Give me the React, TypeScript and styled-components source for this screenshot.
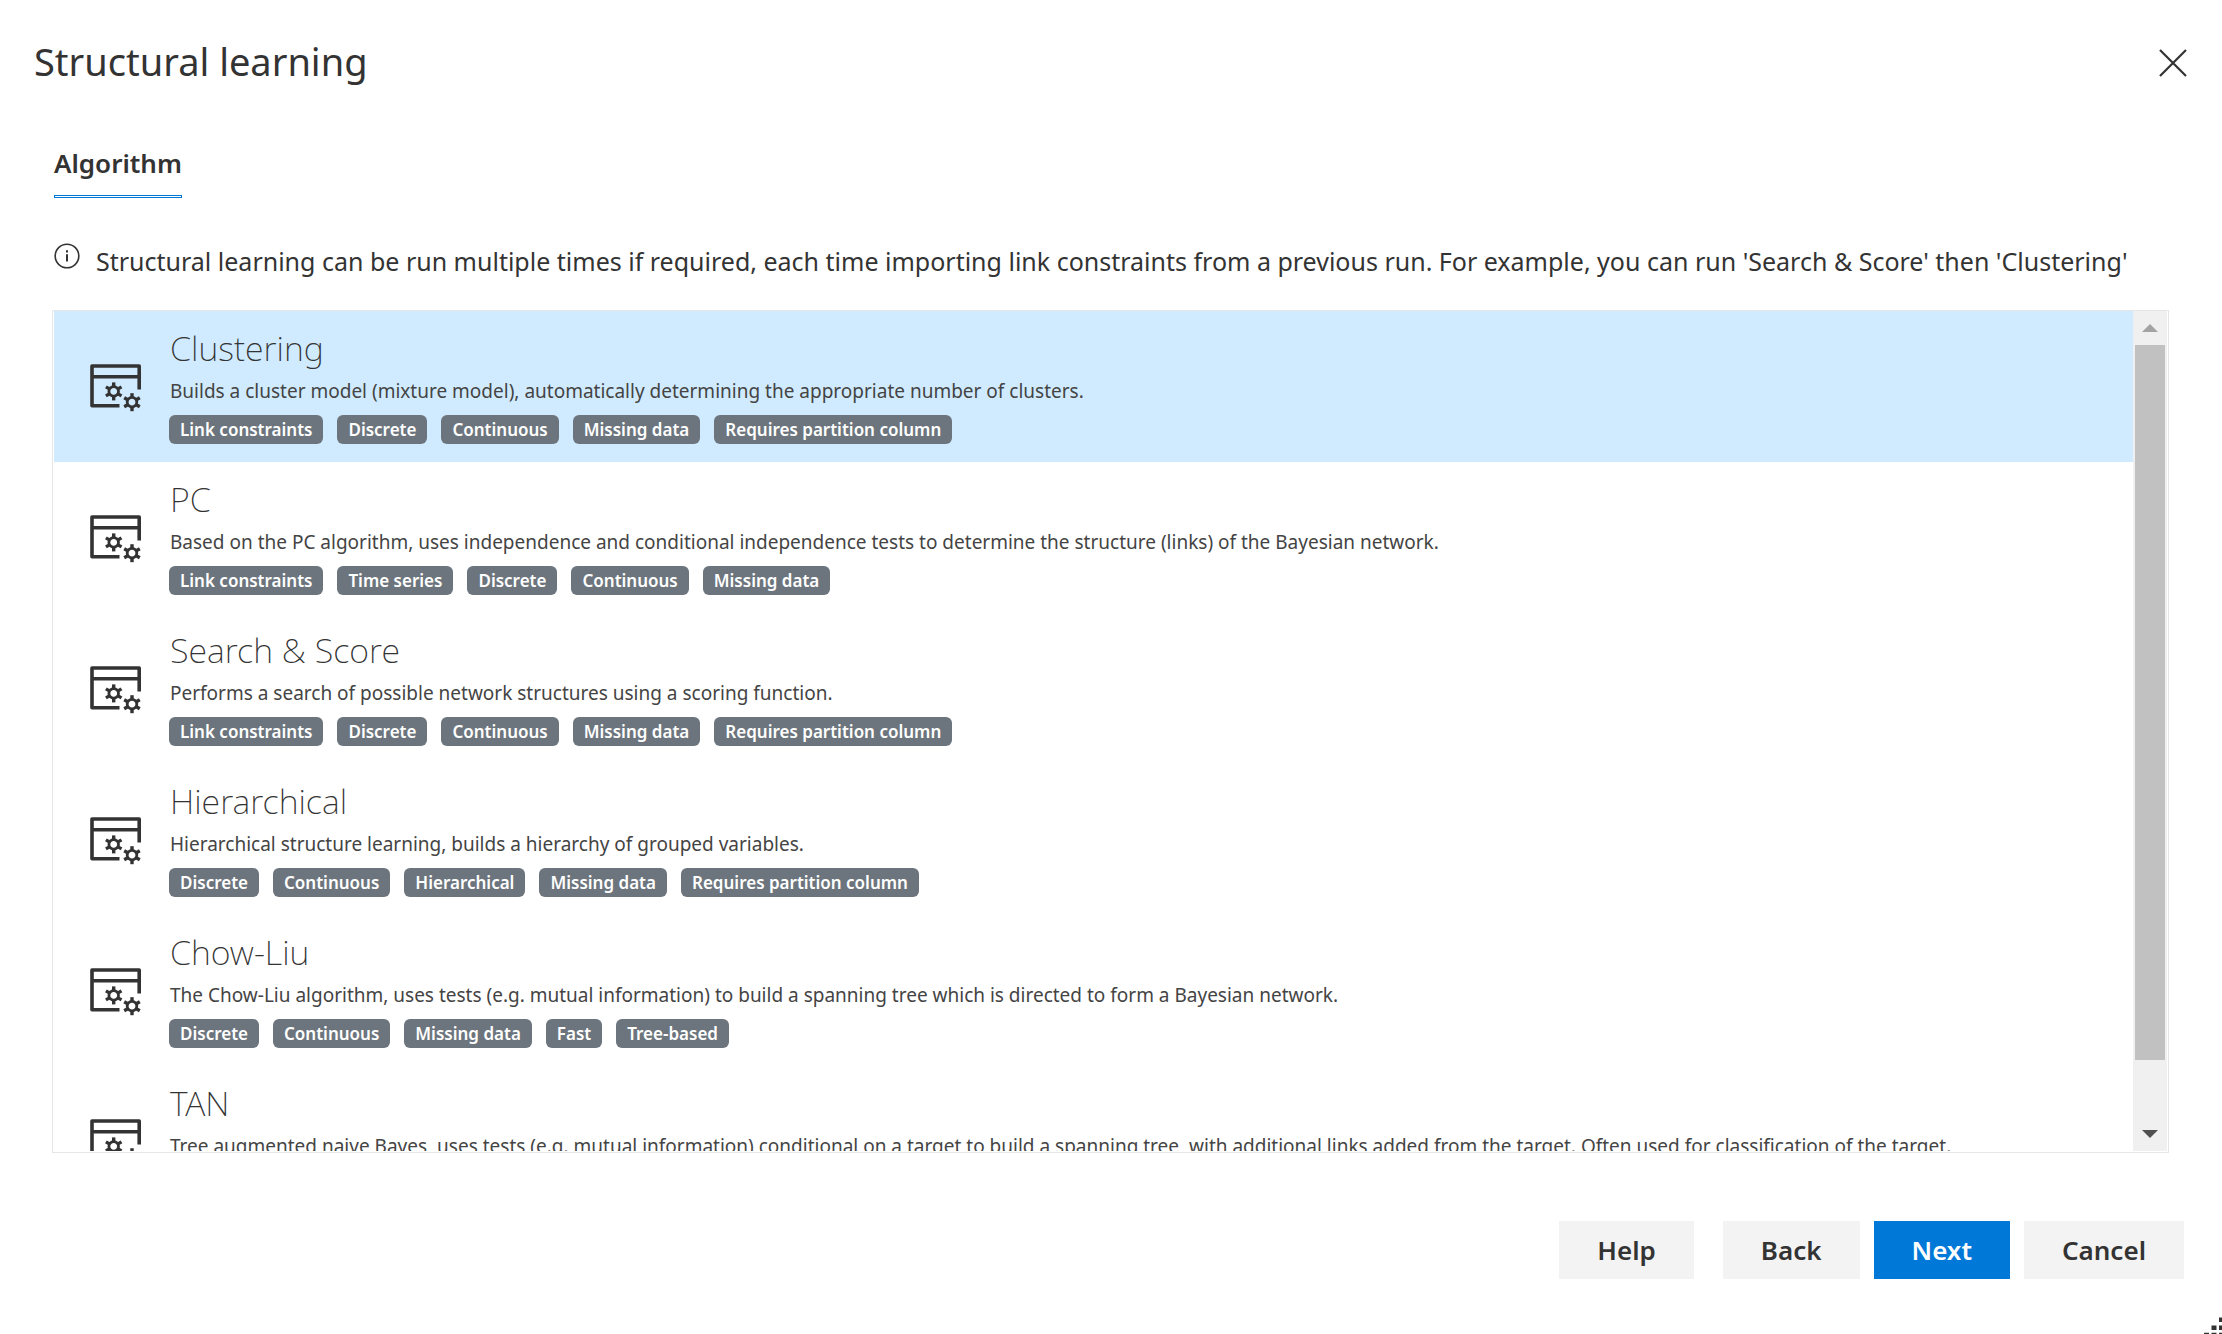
import React, { useState } from 'react';
import styled, { createGlobalStyle } from 'styled-components';

const GlobalStyle = createGlobalStyle`
  *, *::before, *::after { box-sizing: border-box; }
  body {
    margin: 0;
    background: #fff;
    color: #333;
    font-family: "Noto Sans", "Open Sans", sans-serif;
  }
`;

const Dialog = styled.main`
  position: relative;
  display: flex;
  flex-direction: column;
  height: 100vh;
  overflow: hidden;
`;

const Header = styled.header`
  display: flex;
  justify-content: space-between;
  align-items: center;
  padding: 35px 35px 0 34px;
`;

const Title = styled.h1`
  margin: 0;
  font-size: 38px;
  font-weight: 400;
  line-height: 52px;
`;

const CloseButton = styled.button`
  display: flex;
  padding: 4px 0 0;
  border: 0;
  background: none;
  color: inherit;
  cursor: pointer;
`;

const Content = styled.section`
  flex: 1;
  min-height: 0;
  display: flex;
  flex-direction: column;
  padding: 58px 53px 0 52px;
`;

const Tabs = styled.nav`
  display: flex;
  padding-left: 2px;
`;

const Tab = styled.button`
  display: flex;
  flex-direction: column;
  gap: 14px;
  padding: 0;
  border: 0;
  background: none;
  color: inherit;
  font: 600 26px/36px "Noto Sans", "Open Sans", sans-serif;

  &::after {
    content: "";
    height: 3px;
    border: 1px solid #0078d7;
  }
`;

const Info = styled.p`
  display: flex;
  gap: 16px;
  margin: 45px 0 31px;
  padding-left: 2px;
  font-size: 25px;
  line-height: 36px;
  white-space: nowrap;

  svg { flex: none; }
`;

const ListFrame = styled.div`
  flex: 1;
  min-height: 0;
  display: flex;
  padding: 0 1px 1px;
  border: 1px solid #e6e6e6;
`;

const List = styled.ul`
  flex: 1;
  min-width: 0;
  margin: 0;
  padding: 0;
  overflow: hidden;
  list-style: none;
`;

const Item = styled.li<{ $selected: boolean }>`
  display: flex;
  gap: 27px;
  height: 151px;
  padding: 14px 36px 0;
  background: ${(p) => (p.$selected ? '#d0ebff' : 'transparent')};
  cursor: pointer;

  > svg { flex: none; margin-top: 39px; }
`;

const Name = styled.h2`
  margin: 0;
  padding-left: 1px;
  font-size: 34px;
  font-weight: 200;
  line-height: 46px;
`;

const Description = styled.p`
  margin: 0;
  padding-left: 1px;
  color: #444;
  font-size: 19px;
  line-height: 40px;
  white-space: nowrap;
`;

const Tags = styled.div`
  display: flex;
  gap: 14px;
  margin-top: 4px;
`;

const Tag = styled.span`
  padding: 0 11px;
  border-radius: 6px;
  background: #6c757d;
  color: #fff;
  font-size: 17px;
  font-weight: 600;
  line-height: 29px;
`;

const Scrollbar = styled.div`
  display: flex;
  flex-direction: column;
  width: 34px;
  background: #f0f0f0;
`;

const ScrollArrow = styled.button<{ $color: string }>`
  display: flex;
  align-items: center;
  justify-content: center;
  height: 34px;
  padding: 0;
  border: 0;
  background: none;
  color: ${(p) => p.$color};
`;

const Track = styled.div`
  flex: 1;
  padding: 0 2px;
`;

const Thumb = styled.div`
  height: 92.6%;
  background: #c1c1c1;
`;

const Footer = styled.footer`
  display: flex;
  justify-content: flex-end;
  gap: 14px;
  padding: 68px 38px 55px;
`;

const Action = styled.button<{ $primary?: boolean; $apart?: boolean }>`
  height: 58px;
  margin-right: ${(p) => (p.$apart ? '15px' : '0')};
  padding: 0 38px;
  border: 0;
  background: ${(p) => (p.$primary ? '#0078d7' : '#f3f3f3')};
  color: ${(p) => (p.$primary ? '#fff' : '#333')};
  font: 600 26px/36px "Noto Sans", "Open Sans", sans-serif;
  cursor: pointer;
`;

const Grip = styled.svg`
  position: absolute;
  right: 0;
  bottom: 0;
  cursor: nwse-resize;
`;

type Algorithm = { name: string; text: string; tags: string[] };

const algorithms: Algorithm[] = [
  {
    name: 'Clustering',
    text: 'Builds a cluster model (mixture model), automatically determining the appropriate number of clusters.',
    tags: ['Link constraints', 'Discrete', 'Continuous', 'Missing data', 'Requires partition column'],
  },
  {
    name: 'PC',
    text: 'Based on the PC algorithm, uses independence and conditional independence tests to determine the structure (links) of the Bayesian network.',
    tags: ['Link constraints', 'Time series', 'Discrete', 'Continuous', 'Missing data'],
  },
  {
    name: 'Search & Score',
    text: 'Performs a search of possible network structures using a scoring function.',
    tags: ['Link constraints', 'Discrete', 'Continuous', 'Missing data', 'Requires partition column'],
  },
  {
    name: 'Hierarchical',
    text: 'Hierarchical structure learning, builds a hierarchy of grouped variables.',
    tags: ['Discrete', 'Continuous', 'Hierarchical', 'Missing data', 'Requires partition column'],
  },
  {
    name: 'Chow-Liu',
    text: 'The Chow-Liu algorithm, uses tests (e.g. mutual information) to build a spanning tree which is directed to form a Bayesian network.',
    tags: ['Discrete', 'Continuous', 'Missing data', 'Fast', 'Tree-based'],
  },
  {
    name: 'TAN',
    text: 'Tree augmented naive Bayes, uses tests (e.g. mutual information) conditional on a target to build a spanning tree, with additional links added from the target. Often used for classification of the target.',
    tags: [],
  },
];

const Gear = ({ x, y }: { x: number; y: number }) => (
  <g transform={`translate(${x} ${y})`}>
    <circle r="4.8" strokeWidth="2.8" />
    {[0, 60, 120, 180, 240, 300].map((angle) => (
      <path key={angle} d="M0-5V-9" strokeWidth="3.4" transform={`rotate(${angle})`} />
    ))}
  </g>
);

const WindowGears = () => (
  <svg width="52" height="48" viewBox="0 0 52 48" fill="none" stroke="#333" strokeWidth="3.6" aria-hidden="true">
    <path d="M29.5 41.8H2V2H49.2V25.5M2 12.8H49.2" strokeLinejoin="round" />
    <Gear x={23.7} y={27.4} />
    <Gear x={42} y={38.2} />
  </svg>
);

export default function App() {
  const [selected, setSelected] = useState('Clustering');

  return (
    <>
      <GlobalStyle />
      <Dialog>
        <Header>
          <Title>Structural learning</Title>
          <CloseButton aria-label="Close">
            <svg width="28" height="28" viewBox="0 0 28 28" fill="none" stroke="currentColor" strokeWidth="2.2">
              <path d="M1 1L27 27M27 1L1 27" />
            </svg>
          </CloseButton>
        </Header>
        <Content>
          <Tabs>
            <Tab>Algorithm</Tab>
          </Tabs>
          <Info>
            <svg width="26" height="26" viewBox="0 0 26 26" fill="none" stroke="#333" aria-hidden="true">
              <circle cx="13" cy="13" r="11.8" strokeWidth="1.6" />
              <path d="M13 11.2V18.5M13 7.2V9.4" strokeWidth="2" />
            </svg>
            <span>
              Structural learning can be run multiple times if required, each time importing link constraints from a
              previous run. For example, you can run 'Search &amp; Score' then 'Clustering'
            </span>
          </Info>
          <ListFrame>
            <List role="listbox" aria-label="Algorithm">
              {algorithms.map((a) => (
                <Item
                  key={a.name}
                  role="option"
                  aria-selected={a.name === selected}
                  $selected={a.name === selected}
                  onClick={() => setSelected(a.name)}
                >
                  <WindowGears />
                  <div>
                    <Name>{a.name}</Name>
                    <Description>{a.text}</Description>
                    <Tags>
                      {a.tags.map((t) => (
                        <Tag key={t}>{t}</Tag>
                      ))}
                    </Tags>
                  </div>
                </Item>
              ))}
            </List>
            <Scrollbar>
              <ScrollArrow $color="#a3a3a3" aria-label="Scroll up">
                <svg width="16" height="8" fill="currentColor"><path d="M0 8L8 0L16 8Z" /></svg>
              </ScrollArrow>
              <Track>
                <Thumb />
              </Track>
              <ScrollArrow $color="#505050" aria-label="Scroll down">
                <svg width="16" height="8" fill="currentColor"><path d="M0 0H16L8 8Z" /></svg>
              </ScrollArrow>
            </Scrollbar>
          </ListFrame>
        </Content>
        <Footer>
          <Action $apart>Help</Action>
          <Action>Back</Action>
          <Action $primary>Next</Action>
          <Action>Cancel</Action>
        </Footer>
        <Grip width="18" height="17" viewBox="0 0 18 17" fill="#333" aria-hidden="true">
          <path d="M15 .5h5v4.500h-5zM7.500 8.500h5v4.500h-5zM15 8.500h5v4.500h-5zM0 15.800h5v4.500h-5zM7.500 15.800h5v4.500h-5zM15 15.800h5v4.500h-5z" />
        </Grip>
      </Dialog>
    </>
  );
}
